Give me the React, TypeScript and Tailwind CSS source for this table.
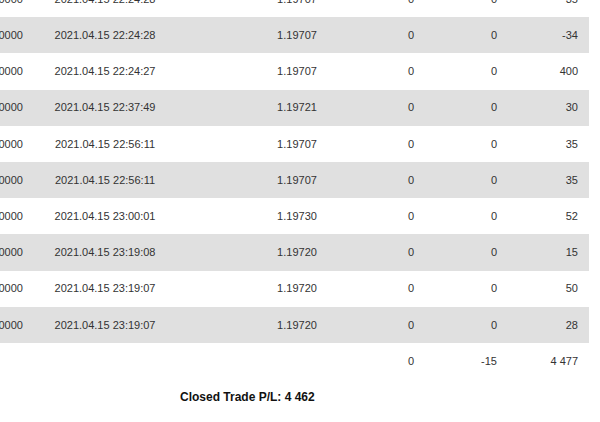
const rows = [
  { ref: "1.00000", time: "2021.04.15 22:24:28", price: "1.19707", sl: "0", tp: "0", pl: "35" },
  { ref: "1.00000", time: "2021.04.15 22:24:28", price: "1.19707", sl: "0", tp: "0", pl: "-34" },
  { ref: "1.00000", time: "2021.04.15 22:24:27", price: "1.19707", sl: "0", tp: "0", pl: "400" },
  { ref: "1.00000", time: "2021.04.15 22:37:49", price: "1.19721", sl: "0", tp: "0", pl: "30" },
  { ref: "1.00000", time: "2021.04.15 22:56:11", price: "1.19707", sl: "0", tp: "0", pl: "35" },
  { ref: "1.00000", time: "2021.04.15 22:56:11", price: "1.19707", sl: "0", tp: "0", pl: "35" },
  { ref: "1.00000", time: "2021.04.15 23:00:01", price: "1.19730", sl: "0", tp: "0", pl: "52" },
  { ref: "1.00000", time: "2021.04.15 23:19:08", price: "1.19720", sl: "0", tp: "0", pl: "15" },
  { ref: "1.00000", time: "2021.04.15 23:19:07", price: "1.19720", sl: "0", tp: "0", pl: "50" },
  { ref: "1.00000", time: "2021.04.15 23:19:07", price: "1.19720", sl: "0", tp: "0", pl: "28" },
];

const grid =
  "grid grid-cols-[86px_118px_216px_62px_104px_43px] items-center h-[36.2px]";

export default function App() {
  return (
    <div
      className="w-[600px] h-[422px] overflow-hidden bg-white text-[11px] text-[#333]"
      style={{ fontFamily: '"Liberation Sans", Arial, sans-serif' }}
    >
      <div className="-ml-[40px] -mt-[19px] w-[629px]">
        {rows.map((r, i) => (
          <div key={i} className={`${grid} ${i % 2 === 1 ? "bg-[#e0e0e0]" : "bg-white"}`}>
            <div className="text-center">{r.ref}</div>
            <div className="text-center">{r.time}</div>
            <div className="text-center pl-[50px]">{r.price}</div>
            <div className="text-center">{r.sl}</div>
            <div className="text-center">{r.tp}</div>
            <div className="text-right pr-[11px]">{r.pl}</div>
          </div>
        ))}

        {/* totals */}
        <div className={grid}>
          <div />
          <div />
          <div />
          <div className="text-center">0</div>
          <div className="text-center pr-[10px]">-15</div>
          <div className="text-right pr-[11px]">4 477</div>
        </div>
      </div>

      <div className="mt-[11px] pl-[180px] text-[12px] leading-[14px] font-bold text-[#111]">
        Closed Trade P/L: 4 462
      </div>
    </div>
  );
}
